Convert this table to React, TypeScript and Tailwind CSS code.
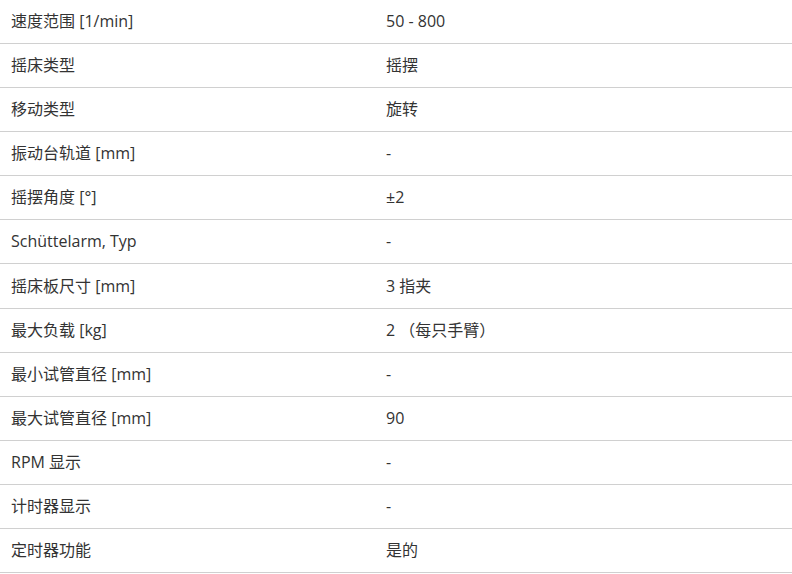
const rows: [string, string][] = [
  ["速度范围 [1/min]", "50 - 800"],
  ["摇床类型", "摇摆"],
  ["移动类型", "旋转"],
  ["振动台轨道 [mm]", "-"],
  ["摇摆角度 [°]", "±2"],
  ["Schüttelarm, Typ", "-"],
  ["摇床板尺寸 [mm]", "3 指夹"],
  ["最大负载 [kg]", "2 （每只手臂）"],
  ["最小试管直径 [mm]", "-"],
  ["最大试管直径 [mm]", "90"],
  ["RPM 显示", "-"],
  ["计时器显示", "-"],
  ["定时器功能", "是的"],
];

export default function App() {
  return (
    <div className="w-[792px] bg-white text-[16px] text-[#333] font-['Open_Sans','Noto_Sans_CJK_SC',sans-serif]">
      {rows.map(([label, value], i) => (
        <div
          key={i}
          className="grid grid-cols-[375px_1fr] h-[44.08px] items-center border-b border-[#d0d0d0]"
        >
          <div className="pl-[11px] pb-[1px]">{label}</div>
          <div className="pl-[11px] pb-[1px]">{value}</div>
        </div>
      ))}
    </div>
  );
}
